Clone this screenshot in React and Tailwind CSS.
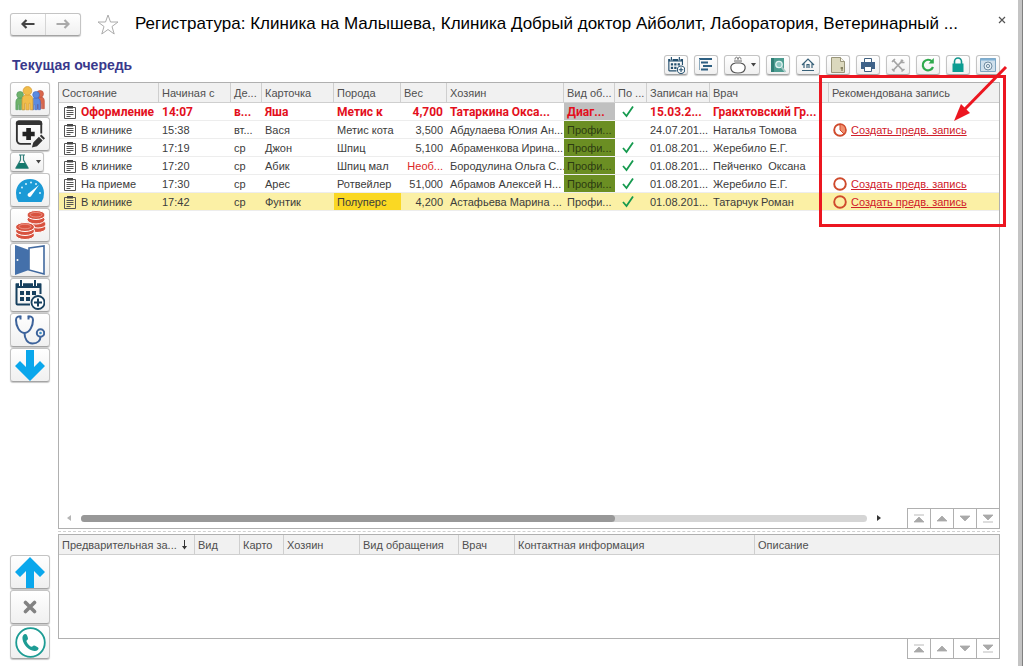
import clsx from 'clsx'

const QUEUE_COLUMNS = [
  { title: 'Состояние', width: 'w-[100px]' },
  { title: 'Начиная с', width: 'w-[72px]' },
  { title: 'Де...', width: 'w-[31px]' },
  { title: 'Карточка', width: 'w-[72px]' },
  { title: 'Порода', width: 'w-[67px]' },
  { title: 'Вес', width: 'w-[46px]' },
  { title: 'Хозяин', width: 'w-[117px]' },
  { title: 'Вид об...', width: 'w-[51px]' },
  { title: 'По ...', width: 'w-[32px]' },
  { title: 'Записан на', width: 'w-[63px]' },
  { title: 'Врач', width: 'w-[119px]' },
  { title: 'Рекомендована запись', width: '' },
]

const QUEUE = [
  { state: 'Оформление', time: '14:07', day: 'в...', card: 'Яша', breed: 'Метис к', weight: '4,700', owner: 'Татаркина Окса...', kind: 'Диаг...', paid: true, date: '15.03.2...', doctor: 'Гракхтовский Гр...', urgent: true },
  { state: 'В клинике', time: '15:38', day: 'вт...', card: 'Вася', breed: 'Метис кота', weight: '3,500', owner: 'Абдулаева Юлия Ан...', kind: 'Профи...', paid: false, date: '24.07.201...', doctor: 'Наталья Томова', visit: 'partial' },
  { state: 'В клинике', time: '17:19', day: 'ср', card: 'Джон', breed: 'Шпиц', weight: '5,100', owner: 'Абраменкова Ирина...', kind: 'Профи...', paid: true, date: '01.08.201...', doctor: 'Жеребило Е.Г.' },
  { state: 'В клинике', time: '17:20', day: 'ср', card: 'Абик', breed: 'Шпиц мал', weight: 'Необ...', noWeight: true, owner: 'Бородулина Ольга С...', kind: 'Профи...', paid: true, date: '01.08.201...', doctor: 'Пейченко  Оксана' },
  { state: 'На приеме', time: '17:30', day: 'ср', card: 'Арес', breed: 'Ротвейлер', weight: '51,000', owner: 'Абрамов Алексей Н...', kind: 'Профи...', paid: true, date: '01.08.201...', doctor: 'Жеребило Е.Г.', visit: 'empty' },
  { state: 'В клинике', time: '17:42', day: 'ср', card: 'Фунтик', breed: 'Полуперс', weight: '4,200', owner: 'Астафьева Марина ...', kind: 'Профи...', paid: true, date: '01.08.201...', doctor: 'Татарчук Роман', visit: 'empty', selected: true },
]

const BOOKING_COLUMNS = [
  { title: 'Предварительная за...', width: 'w-[136px]', sorted: true },
  { title: 'Вид', width: 'w-[45px]' },
  { title: 'Карто', width: 'w-[44px]' },
  { title: 'Хозяин', width: 'w-[76px]' },
  { title: 'Вид обращения', width: 'w-[99px]' },
  { title: 'Врач', width: 'w-[56px]' },
  { title: 'Контактная информация', width: 'w-[240px]' },
  { title: 'Описание', width: '' },
]

const BUTTON = 'flex items-center justify-center shrink-0 rounded-[3px] border border-[#c4c4c4] border-b-[#a4a4a4] bg-linear-to-b from-white to-[#f0f0f0] shadow-[0_1px_1px_#c8c8c8]'

/* ---------- icons ---------- */

function Person({ x, y, s, fill, stroke }) {
  return (
    <g transform={`translate(${x} ${y}) scale(${s})`} fill={fill} stroke={stroke} strokeWidth="0.7">
      <path d="M1 22V13C1 9.500 3 8 6 8s5 1.500 5 5v9H8.500v-6h-1v6h-3v-6h-1v6z" />
      <circle cx="6" cy="4.500" r="4" />
    </g>
  )
}

function PeopleIcon() {
  return (
    <svg width="30" height="26" viewBox="0 0 30 26" aria-hidden="true">
      <Person x={0} y={5} s={0.85} fill="#6fb36b" stroke="#4e9560" />
      <Person x={20} y={4} s={0.85} fill="#d9674c" stroke="#b94c3c" />
      <Person x={16} y={5} s={0.85} fill="#5b8be0" stroke="#3d66bd" />
      <Person x={6} y={0} s={1.08} fill="#f1bd4b" stroke="#d79d35" />
    </svg>
  )
}

function CardEditIcon() {
  return (
    <svg width="30" height="30" viewBox="0 0 32 31" aria-hidden="true">
      <path d="M17 26H6a4 4 0 0 1-4-4V3.500A2.500 2.500 0 0 1 4.500 2h21A2.500 2.500 0 0 1 28 4.500V15" fill="none" stroke="#333" strokeWidth="2" />
      <path d="M1 6V4a3 3 0 0 1 3-3h22a3 3 0 0 1 3 3v2z" fill="#333" />
      <path d="M12 9h5v4h4v5h-4v4h-5v-4H8v-5h4z" fill="#222" />
      <path d="M18 30l1.500-5.500 6-6 4 4-6 6zM26.500 17.500l1.500-1.500 4 4-1.500 1.500z" fill="#333" />
    </svg>
  )
}

function FlaskIcon() {
  return (
    <svg width="16" height="16" viewBox="0 0 16 16" aria-hidden="true">
      <path d="M5 1h6M6.500 1v5L2 14h12L9.500 6V1" fill="none" stroke="#36807c" strokeWidth="1.200" />
      <path d="M5 9h6l3.300 5.500H1.700z" fill="#14786c" />
    </svg>
  )
}

function GaugeIcon() {
  return (
    <svg width="30" height="24" viewBox="0 0 30 24" aria-hidden="true">
      <path d="M3.500 24A15 15 0 0 1 1 15C1 7 7 1 15 1s14 6 14 14a15 15 0 0 1-2.500 9z" fill="#1b9ad6" />
      <g fill="#d5f0fb">
        <circle cx="5" cy="15" r="1" /><circle cx="7" cy="9.500" r="1" /><circle cx="11" cy="6" r="1" />
        <circle cx="16" cy="4.500" r="1" /><circle cx="25" cy="15" r="1" /><circle cx="21" cy="6" r="1" />
      </g>
      <path d="M24 7l-7.500 10.500a2 2 0 1 1-2.500-2.500z" fill="#fff" />
    </svg>
  )
}

function CoinsIcon() {
  return (
    <svg width="31" height="30" viewBox="0 0 31 30" fill="#d8523f" stroke="#fff" strokeWidth="1" aria-hidden="true">
      <ellipse cx="22" cy="18" rx="9" ry="4.500" />
      <ellipse cx="23" cy="14" rx="8" ry="4" />
      <ellipse cx="21" cy="9.500" rx="9" ry="4.500" />
      <ellipse cx="21" cy="5" rx="9" ry="4.500" />
      <ellipse cx="10" cy="25" rx="9.500" ry="4.500" />
      <ellipse cx="10" cy="21" rx="9.500" ry="4.500" />
      <ellipse cx="10" cy="17" rx="9.500" ry="4.500" />
      <ellipse cx="10" cy="16.500" rx="6" ry="2.300" fill="none" stroke="#f0a99d" strokeWidth="0.700" />
      <ellipse cx="21" cy="4.700" rx="6" ry="2.300" fill="none" stroke="#f0a99d" strokeWidth="0.700" />
    </svg>
  )
}

function DoorIcon() {
  return (
    <svg width="32" height="32" viewBox="0 0 32 32" aria-hidden="true">
      <path d="M15 4L30 2v28l-15-4z" fill="#fff" stroke="#41699f" strokeWidth="1.600" />
      <path d="M1 1l14 5v20L1 31z" fill="#4470aa" />
      <circle cx="3.500" cy="16" r="1" fill="#fff" />
    </svg>
  )
}

function CalendarPlusIcon({ size = 30, color = '#17405f' }) {
  return (
    <svg width={size} height={size} viewBox="0 0 30 30" aria-hidden="true">
      <path d="M15 24.500H2.500a1 1 0 0 1-1-1V4.500h24V14" fill="none" stroke={color} strokeWidth="2" />
      <path d="M1 3.500h25V8H1z" fill={color} />
      <path d="M6 0v6M20 0v6" stroke="#fff" strokeWidth="4" />
      <path d="M6 0v6M20 0v6" stroke={color} strokeWidth="2" />
      <path d="M5 11h4v4H5zM11 11h4v4h-4zM17 11h4v4h-4zM5 17h4v4H5zM11 17h4v4h-4z" fill={color} />
      <circle cx="23" cy="22.500" r="6.500" fill="#fff" stroke={color} strokeWidth="1.800" />
      <path d="M23 18.500v8M19 22.500h8" stroke={color} strokeWidth="2" />
    </svg>
  )
}

function StethoscopeIcon() {
  return (
    <svg width="30" height="30" viewBox="0 0 30 30" fill="none" stroke="#3d639b" strokeWidth="2" aria-hidden="true">
      <path d="M6 2C3 1 1 2 1 5c0 5 3 13 8.500 13S18 10 18 5c0-3-2-4-5-3" />
      <path d="M9.500 18c0 6 3 10.500 8 10.500 5.500 0 8-3.500 8-7" />
      <circle cx="25.500" cy="18" r="3.700" />
      <circle cx="25.500" cy="18" r="1.300" fill="#3d8ec4" stroke="none" />
      <path d="M4.500 2.500h2M12.500 2.500h2" strokeWidth="4" />
    </svg>
  )
}

function BigArrow({ up }) {
  return (
    <svg width="30" height="31" viewBox="0 0 30 31" className={clsx(up && 'rotate-180')} aria-hidden="true">
      <path d="M11 0h8v17l6-6 5 5-15 15L0 16l5-5 6 6z" fill="#0aa7ec" />
    </svg>
  )
}

function CrossIcon() {
  return (
    <svg width="14" height="14" viewBox="0 0 14 14" aria-hidden="true">
      <path d="M2.500 2.500l9 9M11.500 2.500l-9 9" stroke="#828282" strokeWidth="3.600" strokeLinecap="round" />
    </svg>
  )
}

function PhoneIcon() {
  return (
    <svg width="31" height="31" viewBox="0 0 31 31" aria-hidden="true">
      <circle cx="15.500" cy="15.500" r="14.300" fill="#fff" stroke="#1d9c94" strokeWidth="1.800" />
      <path d="M10.500 7c-2 0-3.500 2-3 5 .8 6 6 11.500 12 12 2.500.2 4.500-1.500 4-3-.5-1-3.500-2.500-4.500-2.500-1.200 0-1.500 1.500-2.500 1.300-2-.6-4.500-3.500-5-5.500-.2-1 1.500-1.500 1.500-2.500C13 10.500 12 7 10.500 7z" fill="#1d9c94" />
    </svg>
  )
}

function NavArrow({ color, back }) {
  return (
    <svg width="14" height="10" viewBox="0 0 14 10" fill="none" stroke={color} strokeWidth="2.200" className={clsx(!back && 'rotate-180')} aria-hidden="true">
      <path d="M1.500 5H13.500M5.500 1l-4 4 4 4" />
    </svg>
  )
}

function StarIcon() {
  return (
    <svg width="22" height="21" viewBox="0 0 22 21" aria-hidden="true">
      <path d="M11 1l2.500 7H21l-6 4.500L17.200 20 11 15.500 4.800 20 7 12.500 1 8h7.500z" fill="#fff" stroke="#ababab" strokeWidth="1" />
    </svg>
  )
}

function Caret() {
  return (
    <svg width="5" height="4" viewBox="0 0 5 4" aria-hidden="true">
      <path d="M0 0h5L2.500 3.500z" fill="#444" />
    </svg>
  )
}

function ClipboardIcon() {
  return (
    <svg width="12" height="14" viewBox="0 0 12 14" className="shrink-0" fill="none" stroke="#555" aria-hidden="true">
      <path d="M3 2.500H.5v11h11v-11H9" />
      <path d="M3 1h6v2.500H3z" fill="#444" stroke="none" />
      <path d="M2.500 5.500h7M2.500 7.500h7M2.500 9.500h7M2.500 11.500h4" />
    </svg>
  )
}

function CheckIcon() {
  return (
    <svg width="12" height="12" viewBox="0 0 12 12" role="img" aria-label="Да">
      <path d="M1 6l3.500 4L11 0.500" fill="none" stroke="#169a4f" strokeWidth="1.800" />
    </svg>
  )
}

function VisitIcon({ partial }) {
  return (
    <svg width="14" height="14" viewBox="0 0 14 14" className="shrink-0" aria-hidden="true">
      <circle cx="7" cy="7" r="5.800" fill="none" stroke="#cf4a2c" strokeWidth="1.900" />
      {partial && <path d="M7 7V1.200a5.800 5.800 0 0 1 4.100 9.900z" fill="#f0906e" stroke="#cf4a2c" strokeWidth="1" />}
    </svg>
  )
}

function SvgBox({ children }) {
  return <svg width="18" height="18" viewBox="0 0 18 18" fill="none" aria-hidden="true">{children}</svg>
}

const TOOLS = [
  { label: 'Новая запись', icon: <CalendarPlusIcon size={17} color="#24506f" /> },
  { label: 'Диаграмма', icon: <SvgBox><path d="M2 3h13M4 6.500h7M6 10h9M4 13.500h7" stroke="#2d5f82" strokeWidth="1.800" /><path d="M2.500 3v11" stroke="#8aa9bd" /></SvgBox> },
  { label: 'Кошелек', menu: true, icon: <SvgBox><path d="M6.500 7h5c7 1.500 6 10-2.500 10S-.5 8.500 6.500 7z" fill="#fff" stroke="#555" strokeWidth="1.200" /><path d="M5 5h8M6 3.500c0-3 3-3 3 0 0-3 3-3 3 0" stroke="#666" /></SvgBox> },
  { label: 'Поиск', icon: <SvgBox><path d="M2 2h13v14H2z" fill="#4c9c90" /><path d="M2 2h3v14H2z" fill="#2f7f76" /><circle cx="10" cy="8.500" r="3.200" fill="#8cc6c0" stroke="#e2f3f1" strokeWidth="1.300" /><path d="M12.500 11l4 5" stroke="#a4c9c5" strokeWidth="2" /></SvgBox> },
  { label: 'Стационар', icon: <SvgBox><path d="M3 9l6-6 6 6M5 7.500V12M13 7.500V12M8 12V8.500h2V12M3 14.500h12" stroke="#376078" strokeWidth="1.200" /></SvgBox> },
  { label: 'Документ', icon: <SvgBox><path d="M2.500 1.500h9l4 4v11h-13z" fill="#dbd8bd" stroke="#99957a" /><path d="M11.500 1.500v4h4" fill="#f7f6ea" stroke="#99957a" /><path d="M13 11v4M11.500 12h2.500" stroke="#686442" /></SvgBox> },
  { label: 'Печать', icon: <SvgBox><path d="M5.500 6V2.500h7V6" fill="#fff" stroke="#40607f" /><path d="M2 6h14v7H2z" fill="#3f6288" /><path d="M5.500 10.500h7v5h-7z" fill="#fff" stroke="#40607f" /></SvgBox> },
  { label: 'Настройка', icon: <SvgBox><path d="M4 4l10 10.500M14 4L4 14.500" stroke="#a5a5a5" strokeWidth="1.800" /><path d="M3 6l3-3M12.500 3.500v3h3M3 13l2.500 2.500M12.500 15.500L15.500 13" stroke="#a5a5a5" strokeWidth="1.600" /></SvgBox> },
  { label: 'Обновить', icon: <SvgBox><path d="M13 5.500A5.300 5.300 0 1 0 14 11" stroke="#2fa94d" strokeWidth="2.200" /><path d="M14.800 2v5.500H9.500z" fill="#2fa94d" /></SvgBox> },
  { label: 'Заблокировать', icon: <SvgBox><path d="M5.500 8V5.500a3.500 3.500 0 0 1 7 0V8" stroke="#12958c" strokeWidth="1.600" /><path d="M3.500 7.500h11V16h-11z" fill="#0d9d92" /></SvgBox> },
  { label: 'Камера', icon: <SvgBox><path d="M1.500 2.500h15v13h-15z" fill="#cfe0ec" stroke="#7ea4bf" /><path d="M1.500 2.500h15v2h-15z" fill="#7fb0d4" /><circle cx="9" cy="10" r="4" fill="#e6f0f6" stroke="#6e8ba0" /><circle cx="9" cy="10" r="1.600" stroke="#6e8ba0" /></SvgBox> },
]

const ACTIONS = [
  { label: 'Клиенты', icon: <PeopleIcon /> },
  { label: 'Редактировать карточку', icon: <CardEditIcon /> },
  { label: 'Лаборатория', icon: <FlaskIcon />, menu: true },
  { label: 'Показатели', icon: <GaugeIcon /> },
  { label: 'Оплата', icon: <CoinsIcon /> },
  { label: 'Выход', icon: <DoorIcon /> },
  { label: 'Записать', icon: <CalendarPlusIcon /> },
  { label: 'Прием', icon: <StethoscopeIcon /> },
  { label: 'Вниз', icon: <BigArrow /> },
]

const BOOKING_ACTIONS = [
  { label: 'Вверх', icon: <BigArrow up /> },
  { label: 'Удалить', icon: <CrossIcon /> },
  { label: 'Позвонить', icon: <PhoneIcon /> },
]

/* ---------- parts ---------- */

function SideButtons({ items }) {
  return (
    <div className="flex flex-col items-start gap-px">
      {items.map(a => (
        <button key={a.label} aria-label={a.label}
          className={clsx(BUTTON, a.menu ? 'h-5 w-[34px] gap-1.5' : 'h-[34px] w-10')}>
          {a.icon}
          {a.menu && <Caret />}
        </button>
      ))}
    </div>
  )
}

function TableHead({ columns }) {
  return (
    <thead>
      <tr className="h-5 bg-[#f1f1f1] text-[#4f4f4f]">
        {columns.map(c => (
          <th key={c.title} scope="col"
            className={clsx('overflow-hidden border-r border-b border-[#cfcfcf] pr-0.5 pl-[3px] text-left font-normal whitespace-nowrap last:border-r-0', c.width)}>
            {c.sorted ? (
              <span className="flex items-center justify-between pr-1">
                {c.title}
                <svg width="7" height="10" viewBox="0 0 7 10" aria-hidden="true">
                  <path d="M3.500 0v8" stroke="#333" /><path d="M1 6h5L3.500 9.500z" fill="#333" />
                </svg>
              </span>
            ) : c.title}
          </th>
        ))}
      </tr>
    </thead>
  )
}

function Cell({ className, children }) {
  return (
    <td className={clsx('overflow-hidden border-b border-[#ededed] pl-[3px] whitespace-pre', className)}>{children}</td>
  )
}

function QueueRow({ row }) {
  return (
    <tr className={clsx('h-[18px]',
      row.urgent ? "font-[Roboto,'Liberation_Sans',sans-serif] text-xs leading-4 font-bold text-[#e3101c]" : 'text-[#3c3c3c]',
      row.selected && 'bg-[#fbf0a5]'
    )}>
      <Cell>
        <span className="flex items-center gap-[5px] pl-0.5"><ClipboardIcon />{row.state}</span>
      </Cell>
      <Cell>{row.time}</Cell>
      <Cell>{row.day}</Cell>
      <Cell>{row.card}</Cell>
      <Cell className={clsx(row.selected && 'bg-[#fad823]')}>{row.breed}</Cell>
      <Cell className={clsx('pr-1 text-right', row.noWeight && 'text-[#dc2626]')}>{row.weight}</Cell>
      <Cell>{row.owner}</Cell>
      <Cell className={clsx(row.urgent ? 'bg-[#c0c0c0]' : !row.selected && 'bg-[#6b8e23] text-[#2c3a12]')}>{row.kind}</Cell>
      <Cell>{row.paid && <span className="flex pl-1"><CheckIcon /></span>}</Cell>
      <Cell>{row.date}</Cell>
      <Cell>{row.doctor}</Cell>
      <Cell>
        {row.visit && (
          <span className="flex items-center gap-1 pl-px">
            <VisitIcon partial={row.visit === 'partial'} />
            <a href="#" className="text-[#d0202a] underline">Создать предв. запись</a>
          </span>
        )}
      </Cell>
    </tr>
  )
}

const PAGER = [
  { label: 'В начало', path: 'M2 1h10M7 3L2 8h10z' },
  { label: 'Назад', path: 'M7 2L2 7h10z' },
  { label: 'Вперед', path: 'M2 2h10L7 7z' },
  { label: 'В конец', path: 'M2 1h10L7 6zM2 8h10' },
]

function Pager({ className }) {
  return (
    <div className={clsx('flex h-5 divide-x divide-[#b0b0b0] border-[#b0b0b0]', className)}>
      {PAGER.map(p => (
        <button key={p.label} aria-label={p.label} className="flex flex-1 items-center justify-center">
          <svg width="14" height="9" viewBox="0 0 14 9" fill="#a9a9a9" aria-hidden="true">
            <path d={p.path} stroke="#a9a9a9" strokeWidth="0.800" />
          </svg>
        </button>
      ))}
    </div>
  )
}

function ScrollBar() {
  return (
    <div className="flex flex-1 items-center gap-2.5 pr-[26px] pl-2">
      <svg width="4" height="6" viewBox="0 0 4 6" aria-hidden="true"><path d="M4 0v6L0 3z" fill="#b5b5b5" /></svg>
      <div className="h-[7px] flex-1 rounded-full bg-[#d5d5d5]">
        <div className="h-full w-[68%] rounded-full bg-[#989898]" />
      </div>
      <svg width="4" height="6" viewBox="0 0 4 6" aria-hidden="true"><path d="M0 0v6l4-3z" fill="#333" /></svg>
    </div>
  )
}

// Red frame and arrow pointing at the "recommended visit" column
function Callout() {
  return (
    <div className="pointer-events-none absolute top-[-8px] right-[-7px] left-[760px] h-[152px] border-3 border-[#ec1620]">
      <svg width="56" height="58" viewBox="0 0 56 58" className="absolute top-[-13px] right-[-5px]" aria-hidden="true">
        <path d="M54 2L12 45" stroke="#ec1620" strokeWidth="3" />
        <path d="M2 56l7-17 9 9z" fill="#ec1620" />
      </svg>
    </div>
  )
}

export default function App() {
  return (
    <div className="flex h-screen min-h-[560px] overflow-hidden bg-white font-['Liberation_Sans',Arial,sans-serif] text-[11px] leading-4">
      <div className="flex min-w-0 flex-1 flex-col pr-[18px] pb-[7px] pl-2.5">
        <header className="flex h-12 items-center">
          <nav className={clsx(BUTTON, 'h-[23px] w-[71px] divide-x divide-[#d5d5d5]')}>
            <button aria-label="Назад" className="flex h-full flex-1 items-center justify-center"><NavArrow back color="#444" /></button>
            <button aria-label="Вперед" className="flex h-full flex-1 items-center justify-center"><NavArrow color="#aaa" /></button>
          </nav>
          <button aria-label="В избранное" className="ml-4"><StarIcon /></button>
          <h1 className="ml-4 min-w-0 flex-1 overflow-hidden text-[17px] leading-6 whitespace-nowrap text-black">
            Регистратура: Клиника на Малышева, Клиника Добрый доктор Айболит, Лаборатория, Ветеринарный ...
          </h1>
          <button aria-label="Закрыть" className="-mr-2.5 mb-2 flex w-4 justify-center">
            <svg width="8" height="8" viewBox="0 0 8 8" aria-hidden="true"><path d="M1 1l6 6M7 1L1 7" stroke="#555" strokeWidth="1.200" /></svg>
          </button>
        </header>

        <div className="flex h-[34px] shrink-0 items-center justify-between">
          <h2 className="pl-0.5 text-sm leading-4 font-bold text-[#39398c]">Текущая очередь</h2>
          <div className="flex gap-1.5">
            {TOOLS.map(t => (
              <button key={t.label} aria-label={t.label}
                className={clsx(BUTTON, 'h-5', t.menu ? 'w-9 gap-1' : 'w-6')}>
                {t.icon}
                {t.menu && <Caret />}
              </button>
            ))}
          </div>
        </div>

        <main className="flex min-h-0 flex-1 gap-2">
          <aside className="flex w-10 shrink-0 flex-col justify-between">
            <SideButtons items={ACTIONS} />
            <SideButtons items={BOOKING_ACTIONS} />
          </aside>

          <div className="flex min-w-0 flex-1 flex-col">
            <section className="relative flex min-h-0 flex-1 flex-col border border-[#b0b0b0]">
              <table className="w-full table-fixed border-separate border-spacing-0">
                <TableHead columns={QUEUE_COLUMNS} />
                <tbody>
                  {QUEUE.map(row => <QueueRow key={row.time} row={row} />)}
                </tbody>
              </table>
              <div className="mt-auto flex">
                <ScrollBar />
                <Pager className="w-[92px] border-t border-l" />
              </div>
              <Callout />
            </section>

            <div className="my-[2px] border-t border-dashed border-[#d0d0d0]" />

            <section className="h-[105px] border border-[#b0b0b0]">
              <table className="w-full table-fixed border-separate border-spacing-0">
                <TableHead columns={BOOKING_COLUMNS} />
              </table>
            </section>
            <div className="flex justify-end">
              <Pager className="w-[93px] border-x border-b" />
            </div>
          </div>
        </main>
      </div>

      <div className="mr-px w-[5px] border-r border-[#808080] bg-[#c4c4c4]" />
    </div>
  )
}
